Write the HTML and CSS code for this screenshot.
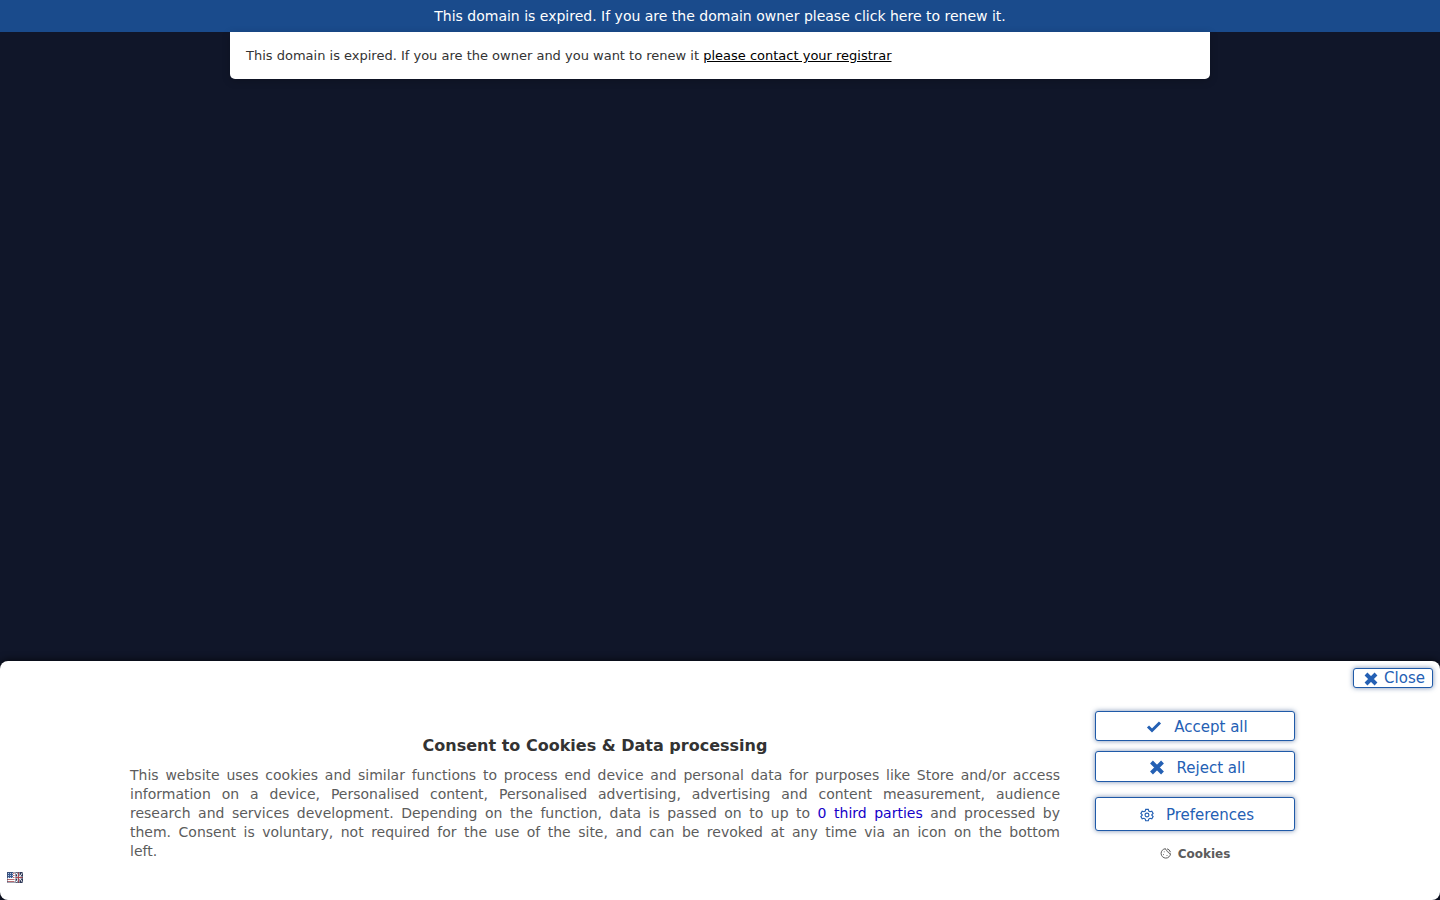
FILE: index.html
```html
<!DOCTYPE html>
<html lang="en">
<head>
<meta charset="utf-8">
<meta name="viewport" content="width=device-width, initial-scale=1">
<title>This domain is expired</title>
<link rel="stylesheet" href="styles.css">
</head>
<body>
<a class="topbar" href="#renew">This domain is expired. If you are the domain owner please click here to renew it.</a>
<main class="notice">This domain is expired. If you are the owner and you want to renew it <a class="notice-link" href="#registrar">please contact your registrar</a></main>
<section class="consent" aria-labelledby="consent-title">
  <div class="consent-top">
    <button class="btn btn-close" type="button"><svg class="icon-close" viewBox="0 0 16 16" aria-hidden="true"><path d="M3 4l10 10M13 4L3 14"/></svg>Close</button>
  </div>
  <div class="consent-body">
    <div class="consent-text">
      <h1 class="title" id="consent-title">Consent to Cookies &amp; Data processing</h1>
      <p class="copy">This website uses cookies and similar functions to process end device and personal data for purposes like Store and/or access <br>information on a device, Personalised content, Personalised advertising, advertising and content measurement, audience <br>research and services development. Depending on the function, data is passed on to up to <a class="parties" href="#parties">0 third parties</a> and processed by <br>them. Consent is voluntary, not required for the use of the site, and can be revoked at any time via an icon on the bottom <br>left.</p>
    </div>
    <div class="actions">
      <button class="btn btn-accept" type="button"><svg class="icon-check" viewBox="0 0 16 16" aria-hidden="true"><path d="M2 7.500l4 4 8-8"/></svg>Accept all</button>
      <button class="btn btn-reject" type="button"><svg class="icon-close" viewBox="0 0 16 16" aria-hidden="true"><path d="M2.500 2l11 11M13.500 2l-11 11"/></svg>Reject all</button>
      <button class="btn btn-prefs" type="button"><svg class="icon-line" viewBox="0 0 16 16" aria-hidden="true"><path d="M6.500 1.500h3l.5 2 1.500.8 2-.6 1.500 2.600L13.500 7.700v.6l1.500 1.500-1.500 2.600-2-.6-1.500.8-.5 2h-3l-.5-2-1.500-.8-2 .6L1 9.800l1.500-1.500v-.6L1 6.300l1.500-2.600 2 .6L6 3.500z"/><circle cx="8" cy="8" r="2.200"/></svg>Preferences</button>
      <a class="cookies" href="#cookies"><svg class="icon-cookie" viewBox="0 0 12 12" aria-hidden="true"><path d="M5.500.7a4.700 4.700 0 1 0 5 5 2 2 0 0 1-2-1.500 2 2 0 0 1-1.700-1.700A2 2 0 0 1 5.500.7zM7 .8a4.900 4.900 0 0 1 3.500 3.400"/><path d="M3.800 3.800h.8M3.200 6.600h.8M6.600 7.500h.8"/></svg>Cookies</a>
    </div>
  </div>
  <div class="language">
    <button class="flag" type="button" aria-label="Language: English"><svg class="flag-art" viewBox="0 0 16 11" aria-hidden="true"><path fill="#fff" d="M0 0h16v11H0z"/><path stroke="#b56b70" d="M0 7.500h7.500M0 9.500h7.500M6 1.500h1.500M6 3.500h1.500M6 5.500h1.500"/><path fill="#38588d" d="M0 0h6v6H0z"/><path stroke="#b7cae2" stroke-dasharray="1 1" d="M1 1.500h5M1 3.500h5M1 5.500h5"/><path fill="#263253" d="M8.500 0H16v11H8.500z"/><path stroke="#fff" d="M8.500 0L16 11M16 0L8.500 11"/><path stroke="#fff" stroke-width="2" d="M8.500 5.500H16M11.500 0v11"/><path stroke="#a94751" d="M8.500 5.500H16M11.500 0v11"/><path fill="none" stroke="#3d4663" stroke-width=".6" d="M.3.300h15.400v10.400H.3z"/></svg></button>
  </div>
</section>
</body>
</html>
```
FILE: styles.css
```css
* {
  box-sizing: border-box;
}

body {
  margin: 0;
  min-height: 100vh;
  display: flex;
  flex-direction: column;
  background: #101629;
  font-family: "DejaVu Sans", sans-serif;
}

.topbar {
  padding: 8px;
  background: #1a4b8c;
  color: #fff;
  font-size: 14px;
  line-height: 16px;
  text-align: center;
  text-decoration: none;
}

.notice {
  width: 100%;
  max-width: 980px;
  margin: 0 auto;
  padding: 16px;
  border-radius: 0 0 5px 5px;
  background: #fff;
  box-shadow: 0 2px 8px rgba(0, 0, 0, 0.2);
  color: #333;
  font-size: 13px;
  line-height: 15px;
}

.notice-link {
  color: #000;
}

.consent {
  margin-top: auto;
  border-radius: 8px;
  background: #fff;
  box-shadow: 0 0 8px rgba(0, 0, 0, 0.8);
}

.consent-top {
  display: flex;
  justify-content: flex-end;
  padding: 7px 7px 0;
}

.btn {
  display: flex;
  align-items: center;
  justify-content: center;
  gap: 12px;
  padding: 2px 0 0 4px;
  border: 1px solid #1f5aa8;
  border-radius: 3px;
  background: #fff;
  box-shadow: 0 0 5px rgba(31, 70, 130, 0.6);
  color: #2460b4;
  font-family: inherit;
  font-size: 15px;
  line-height: 18px;
  cursor: pointer;
}

.btn-close {
  gap: 5px;
  width: 80px;
  height: 20px;
  padding: 0 0 0 2px;
}

.icon-check,
.icon-close,
.icon-line {
  width: 16px;
  height: 16px;
  fill: none;
  stroke: currentColor;
  stroke-width: 4;
}

.icon-check {
  stroke-width: 3;
}

.icon-line {
  width: 14px;
  height: 14px;
  stroke-width: 1.3;
}

.consent-body {
  display: flex;
  width: 100%;
  max-width: 1200px;
  margin: 0 auto;
  padding-top: 23px;
}

.consent-text {
  flex: 1;
  padding: 25px 10px 0;
}

.title {
  margin: 0 0 10px;
  color: #333;
  font-size: 16px;
  line-height: 20px;
  text-align: center;
}

.copy {
  margin: 0;
  color: #5c5c5c;
  font-size: 14px;
  line-height: 19px;
  text-align: justify;
  text-align-last: justify;
}

.parties {
  color: #1400c8;
  text-decoration: none;
}

.actions {
  display: flex;
  flex-direction: column;
  width: 250px;
  padding: 0 25px;
}

.btn-accept {
  height: 30px;
  margin-bottom: 10px;
}

.btn-reject {
  height: 31px;
  margin-bottom: 15px;
}

.btn-prefs {
  height: 34px;
  margin-bottom: 15px;
}

.cookies {
  display: flex;
  align-items: center;
  justify-content: center;
  gap: 6px;
  color: #5c5c5c;
  font-size: 12px;
  font-weight: bold;
  line-height: 16px;
  text-decoration: none;
}

.icon-cookie {
  width: 12px;
  height: 12px;
  fill: none;
  stroke: currentColor;
  stroke-width: 1;
}

.language {
  display: flex;
  padding: 10px 7px 17px;
}

.flag {
  display: flex;
  padding: 0;
  border: 0;
  background: none;
  cursor: pointer;
}

.flag-art {
  width: 16px;
  height: 11px;
}

@media (max-width: 1180px) {
  .copy {
    text-align-last: auto;
  }

  .copy br {
    display: none;
  }
}
```
